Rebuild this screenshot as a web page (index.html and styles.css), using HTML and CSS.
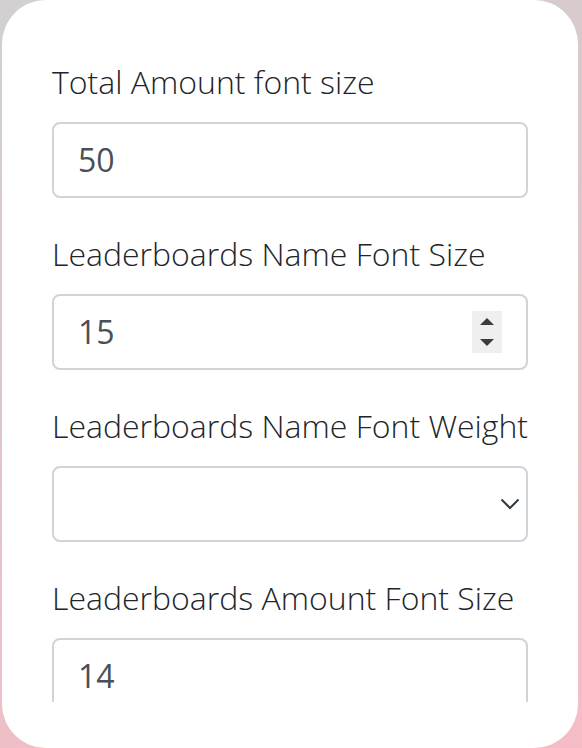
FILE: index.html
```html
<!DOCTYPE html>
<html>
<head>
<meta charset="utf-8">
<link rel="stylesheet" href="styles.css">
</head>
<body>
<div class="card">
  <div class="scroll">
    <div class="group">
      <label class="label">Total Amount font size</label>
      <div class="control"><span class="value">50</span></div>
    </div>
    <div class="group">
      <label class="label">Leaderboards Name Font Size</label>
      <div class="control spin-wrap"><span class="value">15</span>
        <span class="spinner"><span class="tri up"></span><span class="tri down"></span></span>
      </div>
    </div>
    <div class="group">
      <label class="label">Leaderboards Name Font Weight</label>
      <div class="control select">
        <svg class="chev" width="20" height="12" viewBox="0 0 20 12"><path d="M1.5 1.5 L10 10 L18.5 1.5" fill="none" stroke="#343a40" stroke-width="2"/></svg>
      </div>
    </div>
    <div class="group">
      <label class="label">Leaderboards Amount Font Size</label>
      <div class="control"><span class="value">14</span></div>
    </div>
  </div>
</div>
</body>
</html>
```
FILE: styles.css
```css
html, body {
  margin: 0;
  padding: 0;
}
body {
  width: 582px;
  height: 748px;
  overflow: hidden;
  background: linear-gradient(160deg, #d2d0d0 0%, #dcc6ca 40%, #f0bec6 80%, #f6bcc6 100%);
  font-family: "Open Sans", sans-serif;
}
.card {
  box-sizing: border-box;
  margin: 0 4px 0 2px;
  height: 748px;
  background: #fff;
  border-radius: 44px;
  padding-bottom: 46px;
  display: flex;
  flex-direction: column;
}
.scroll {
  flex: 1;
  overflow: hidden;
  padding: 58px 50px 0;
}
.group {
  margin-bottom: 32px;
}
.label {
  display: block;
  font-size: 32px;
  font-weight: 300;
  line-height: 48px;
  color: #212529;
  margin-bottom: 16px;
  white-space: nowrap;
}
.control {
  position: relative;
  box-sizing: border-box;
  height: 76px;
  border: 2px solid #ced4da;
  border-radius: 8px;
  padding: 12px 24px;
  display: flex;
  align-items: center;
}
.value {
  font-size: 32px;
  line-height: 48px;
  color: #495057;
}
.spinner {
  position: absolute;
  right: 24px;
  top: 15px;
  width: 30px;
  height: 42px;
  background: #efefef;
}
.tri {
  position: absolute;
  left: 8px;
  width: 0;
  height: 0;
  border-left: 7px solid transparent;
  border-right: 7px solid transparent;
}
.tri.up {
  top: 7px;
  border-bottom: 7px solid #3c3c3c;
}
.tri.down {
  bottom: 7px;
  border-top: 7px solid #3c3c3c;
}
.chev {
  position: absolute;
  right: 6px;
  top: 30px;
}
```
